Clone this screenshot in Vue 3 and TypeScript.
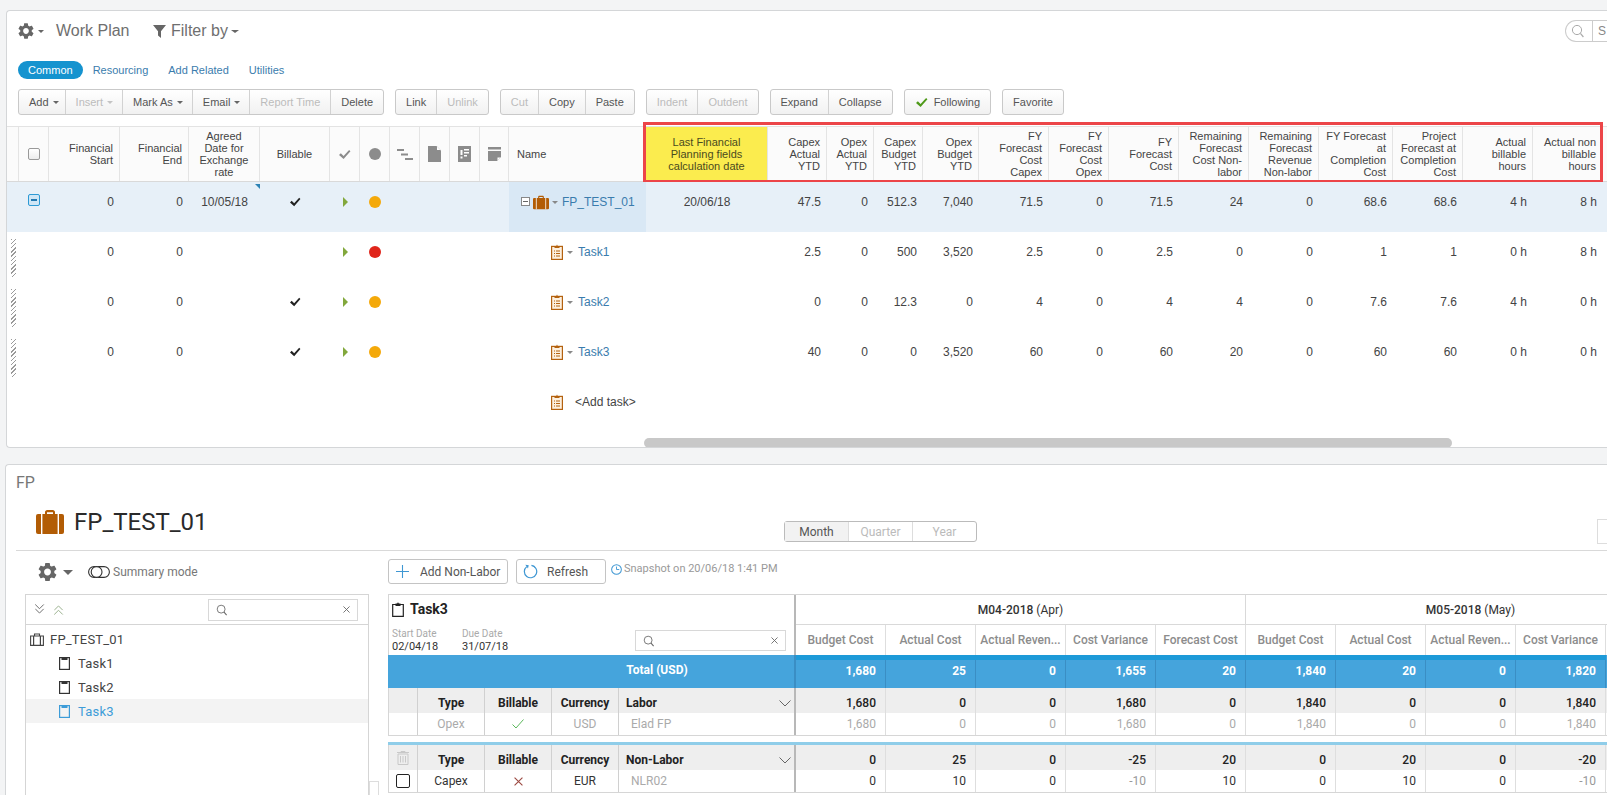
<script setup lang="ts">
interface PlanRow {
  kind: 'project' | 'task'
  name: string
  start: string
  end: string
  agreed?: string
  billable: boolean
  health: 'amber' | 'red'
  calcDate?: string
  values: string[]
}

interface HeadCell {
  label?: string
  icon?: string
  align?: 'left' | 'center'
}

const toolbar = [
  [
    { label: 'Add', menu: true },
    { label: 'Insert', menu: true, off: true },
    { label: 'Mark As', menu: true },
    { label: 'Email', menu: true },
    { label: 'Report Time', off: true },
    { label: 'Delete' },
  ],
  [{ label: 'Link' }, { label: 'Unlink', off: true }],
  [{ label: 'Cut', off: true }, { label: 'Copy' }, { label: 'Paste' }],
  [{ label: 'Indent', off: true }, { label: 'Outdent', off: true }],
  [{ label: 'Expand' }, { label: 'Collapse' }],
]

const leadHead: HeadCell[] = [
  { label: 'Financial\nStart' },
  { label: 'Financial\nEnd' },
  { label: 'Agreed\nDate for\nExchange\nrate', align: 'center' },
  { label: 'Billable', align: 'center' },
  { icon: 'i-check' },
  { icon: 'i-dot' },
  { icon: 'i-steps' },
  { icon: 'i-doc' },
  { icon: 'i-form' },
  { icon: 'i-note' },
  { label: 'Name', align: 'left' },
]

const valueHead = [
  'Capex\nActual\nYTD',
  'Opex\nActual\nYTD',
  'Capex\nBudget\nYTD',
  'Opex\nBudget\nYTD',
  'FY\nForecast\nCost\nCapex',
  'FY\nForecast\nCost\nOpex',
  'FY\nForecast\nCost',
  'Remaining\nForecast\nCost Non-\nlabor',
  'Remaining\nForecast\nRevenue\nNon-labor',
  'FY Forecast\nat\nCompletion\nCost',
  'Project\nForecast at\nCompletion\nCost',
  'Actual\nbillable\nhours',
  'Actual non\nbillable\nhours',
]

const planRows: PlanRow[] = [
  {
    kind: 'project', name: 'FP_TEST_01', start: '0', end: '0', agreed: '10/05/18', billable: true, health: 'amber',
    calcDate: '20/06/18',
    values: ['47.5', '0', '512.3', '7,040', '71.5', '0', '71.5', '24', '0', '68.6', '68.6', '4 h', '8 h'],
  },
  {
    kind: 'task', name: 'Task1', start: '0', end: '0', billable: false, health: 'red',
    values: ['2.5', '0', '500', '3,520', '2.5', '0', '2.5', '0', '0', '1', '1', '0 h', '8 h'],
  },
  {
    kind: 'task', name: 'Task2', start: '0', end: '0', billable: true, health: 'amber',
    values: ['0', '0', '12.3', '0', '4', '0', '4', '4', '0', '7.6', '7.6', '4 h', '0 h'],
  },
  {
    kind: 'task', name: 'Task3', start: '0', end: '0', billable: true, health: 'amber',
    values: ['40', '0', '0', '3,520', '60', '0', '60', '20', '0', '60', '60', '0 h', '0 h'],
  },
]

const measures = ['Budget Cost', 'Actual Cost', 'Actual Reven...', 'Cost Variance']
const monthHead = [...measures, 'Forecast Cost', ...measures]

const totals = ['1,680', '25', '0', '1,655', '20', '1,840', '20', '0', '1,820']
const laborHead = ['1,680', '0', '0', '1,680', '0', '1,840', '0', '0', '1,840']
const laborRow = ['1,680', '0', '0', '1,680', '0', '1,840', '0', '0', '1,840']
const nonLaborHead = ['0', '25', '0', '-25', '20', '0', '20', '0', '-20']
const nonLaborRow = ['0', '10', '0', '-10', '10', '0', '10', '0', '-10']
</script>

<template>
  <div class="page">
    <svg class="defs" width="0" height="0" aria-hidden="true">
      <symbol id="i-gear" viewBox="2 2 20 20">
        <path d="M19.14 12.94c.04-.3.06-.61.06-.94 0-.32-.02-.64-.07-.94l2.03-1.58a.49.49 0 0 0 .12-.61l-1.92-3.32a.488.488 0 0 0-.59-.22l-2.39.96c-.5-.38-1.03-.7-1.62-.94l-.36-2.54a.484.484 0 0 0-.48-.41h-3.84c-.24 0-.43.17-.47.41l-.36 2.54c-.59.24-1.13.57-1.62.94l-2.39-.96c-.22-.08-.47 0-.59.22L2.74 8.87c-.12.21-.08.47.12.61l2.03 1.58c-.05.3-.09.63-.09.94s.02.64.07.94l-2.03 1.58a.49.49 0 0 0-.12.61l1.92 3.32c.12.22.37.29.59.22l2.39-.96c.5.38 1.03.7 1.62.94l.36 2.54c.05.24.24.41.48.41h3.84c.24 0 .44-.17.47-.41l.36-2.54c.59-.24 1.13-.56 1.62-.94l2.39.96c.22.08.47 0 .59-.22l1.92-3.32c.12-.22.07-.47-.12-.61l-2.01-1.58zM12 15.6c-1.98 0-3.6-1.62-3.6-3.6s1.62-3.6 3.6-3.6 3.6 1.62 3.6 3.6-1.62 3.6-3.6 3.6z" fill="currentColor" />
      </symbol>
      <symbol id="i-check" viewBox="0 0 14 12">
        <path d="M1 6.5l2-2 3 3L12 1l1.5 1.5L6 11z" fill="currentColor" />
      </symbol>
      <symbol id="i-dot" viewBox="0 0 12 12">
        <circle cx="6" cy="6" r="6" fill="currentColor" />
      </symbol>
      <symbol id="i-steps" viewBox="0 0 16 12">
        <path d="M0 1h7v2H0zM4 5.5h7v2H4zM8 10h8v2H8z" fill="currentColor" />
      </symbol>
      <symbol id="i-doc" viewBox="0 0 13 16">
        <path d="M0 0h8.5L13 4.5V16H0z" fill="currentColor" />
        <path d="M9 .5L12.5 4H9z" fill="#fff" />
      </symbol>
      <symbol id="i-form" viewBox="0 0 13 16">
        <path d="M0 0h13v16H0z" fill="currentColor" />
        <path d="M2.5 4h2v5h-2zM2.5 10.5h2v2h-2zM6 3h5v1.5H6zM6 6h5v1.5H6zM6 9h3v1.5H6z" fill="#fff" />
      </symbol>
      <symbol id="i-note" viewBox="0 0 13 14">
        <path d="M0 0h13v2.5H0zM0 4h13v6l-4 4H0z" fill="currentColor" />
        <path d="M9.5 13.5V10.5h3z" fill="#fff" />
      </symbol>
      <symbol id="i-case" viewBox="0 0 28 24">
        <path d="M9 5V2.2C9 1 10 0 11.2 0h5.6C18 0 19 1 19 2.2V5h-2V2.2h-6V5z" fill="currentColor" />
        <rect y="4" width="28" height="20" rx="2" fill="currentColor" />
        <path d="M5 4h1.4v20H5zM21.6 4H23v20h-1.4z" fill="#fff" />
      </symbol>
      <symbol id="i-clip" viewBox="0 0 12 16">
        <rect x=".6" y="2.4" width="10.8" height="13" fill="#fdf0df" stroke="currentColor" stroke-width="1.2" />
        <path d="M3.5 4V2.2h1.7L6 .4l.8 1.8h1.7V4z" fill="currentColor" />
        <path d="M3 6.5h1v1H3zM5 6.5h4v1H5zM3 9h1v1H3zM5 9h4v1H5zM3 11.5h1v1H3zM5 11.5h4v1H5z" fill="currentColor" />
      </symbol>
      <symbol id="i-lens" viewBox="0 0 14 14">
        <circle cx="6" cy="6" r="4.6" fill="none" stroke="currentColor" />
        <path d="M9.4 9.4l3 3.6" stroke="currentColor" stroke-width="1.2" />
      </symbol>
      <symbol id="i-times" viewBox="0 0 8 8">
        <path d="M.5.5l7 7M7.5.5l-7 7" stroke="currentColor" fill="none" />
      </symbol>
      <symbol id="i-task" viewBox="0 0 11 13">
        <rect x=".6" y=".6" width="9.8" height="11.8" fill="none" stroke="currentColor" stroke-width="1.2" />
        <path d="M2.5 0h6v3h-6z" fill="currentColor" />
      </symbol>
      <symbol id="i-chev" viewBox="0 0 12 7">
        <path d="M.5.5L6 6 11.5.5" fill="none" stroke="currentColor" />
      </symbol>
    </svg>

    <!-- work plan -->
    <section class="plan">
      <header class="plan__head">
        <svg class="gear-sm"><use href="#i-gear" /></svg>
        <i class="caret plan__gear-caret" />
        <span class="plan__title">Work Plan</span>
        <svg class="funnel" viewBox="0 0 14 14"><path d="M0 0h14L8.6 6.6V14L5.4 11.4V6.6z" fill="#666" /></svg>
        <span class="plan__filter">Filter by</span>
        <i class="caret caret--wide" />
        <div class="plan__search">
          <svg class="plan__lens"><use href="#i-lens" /></svg>
          <span>S</span>
        </div>
      </header>

      <nav class="tabs">
        <a class="tabs__item tabs__item--on">Common</a>
        <a class="tabs__item">Resourcing</a>
        <a class="tabs__item">Add Related</a>
        <a class="tabs__item">Utilities</a>
      </nav>

      <div class="toolbar">
        <div v-for="(group, g) in toolbar" :key="g" class="btn-group">
          <button
            v-for="b in group"
            :key="b.label"
            type="button"
            class="btn"
            :class="{ 'btn--off': b.off, 'btn--menu': b.menu }"
          >
            {{ b.label }}<i v-if="b.menu" class="caret btn__caret" />
          </button>
        </div>
        <div class="btn-group">
          <button type="button" class="btn">
            <svg class="btn__check"><use href="#i-check" /></svg>Following
          </button>
        </div>
        <div class="btn-group">
          <button type="button" class="btn">Favorite</button>
        </div>
      </div>

      <div class="grid">
        <div class="grid__row grid__row--head">
          <div class="head-cell head-cell--blank" />
          <div class="head-cell head-cell--center"><span class="box" /></div>
          <div
            v-for="(h, i) in leadHead"
            :key="i"
            class="head-cell"
            :class="{ 'head-cell--center': h.align === 'center' || h.icon, 'head-cell--left': h.align === 'left' }"
          >
            <svg v-if="h.icon" class="head-icon" :class="h.icon"><use :href="'#' + h.icon" /></svg>
            <template v-else>{{ h.label }}</template>
          </div>
          <div class="head-cell head-cell--center head-cell--calc">Last Financial<br>Planning fields<br>calculation date</div>
          <div v-for="h in valueHead" :key="h" class="head-cell">{{ h }}</div>
          <div class="head-cell head-cell--blank" />
          <div class="grid__outline" />
        </div>

        <div
          v-for="row in planRows"
          :key="row.name"
          class="grid__row"
          :class="{ 'grid__row--sel': row.kind === 'project' }"
        >
          <div class="cell"><span v-if="row.kind === 'task'" class="hatch" /></div>
          <div class="cell cell--center">
            <span v-if="row.kind === 'project'" class="box box--minus" />
          </div>
          <div class="cell">{{ row.start }}</div>
          <div class="cell">{{ row.end }}</div>
          <div class="cell cell--center cell--agreed">{{ row.agreed }}</div>
          <div class="cell cell--center">
            <svg v-if="row.billable" class="tick"><use href="#i-check" /></svg>
          </div>
          <div class="cell cell--center"><i class="play" /></div>
          <div class="cell cell--center">
            <svg class="health" :class="'health--' + row.health"><use href="#i-dot" /></svg>
          </div>
          <div class="cell" />
          <div class="cell" />
          <div class="cell" />
          <div class="cell" />
          <div class="cell cell--name" :class="{ 'cell--name-sel': row.kind === 'project' }">
            <template v-if="row.kind === 'project'">
              <span class="tree-toggle" />
              <svg class="case-sm"><use href="#i-case" /></svg>
            </template>
            <svg v-else class="clip clip--indent"><use href="#i-clip" /></svg>
            <i class="caret caret--sm" />
            <a class="cell__link">{{ row.name }}</a>
          </div>
          <div class="cell cell--center">{{ row.calcDate }}</div>
          <div v-for="(v, i) in row.values" :key="i" class="cell">{{ v }}</div>
          <div class="cell" />
        </div>

        <div class="grid__row">
          <div v-for="n in 12" :key="n" class="cell" />
          <div class="cell cell--name">
            <svg class="clip clip--indent"><use href="#i-clip" /></svg>
            <span class="cell__add">&lt;Add task&gt;</span>
          </div>
        </div>
      </div>

      <div class="hscroll"><div class="hscroll__thumb" /></div>
    </section>

    <!-- financial plan -->
    <section class="fp">
      <div class="fp__label">FP</div>
      <div class="fp__top">
        <div class="fp__title">
          <svg class="case-lg"><use href="#i-case" /></svg>
          <h1>FP_TEST_01</h1>
        </div>
        <div class="period">
          <span class="period__item period__item--on">Month</span>
          <span class="period__item">Quarter</span>
          <span class="period__item">Year</span>
        </div>
        <div class="fp__top-btn" />
      </div>

      <div class="fp__body">
        <aside class="side">
          <div class="side__tools">
            <svg class="gear-lg"><use href="#i-gear" /></svg>
            <i class="caret caret--lg" />
            <svg class="toggle" viewBox="0 0 22 12">
              <rect x=".6" y=".6" width="20.8" height="10.8" rx="5.4" fill="none" stroke="#333" stroke-width="1.1" />
              <circle cx="8.6" cy="6" r="5.4" fill="#fff" stroke="#333" stroke-width="1.1" />
            </svg>
            <span>Summary mode</span>
          </div>
          <div class="side__wrap">
            <div class="tree">
              <div class="tree__bar">
                <svg class="dbl" viewBox="0 0 12 10"><use href="#i-chev" width="12" height="5" /><use href="#i-chev" y="4" width="12" height="5" /></svg>
                <svg class="dbl dbl--up" viewBox="0 0 12 10"><use href="#i-chev" width="12" height="5" /><use href="#i-chev" y="4" width="12" height="5" /></svg>
                <div class="search search--tree">
                  <svg class="search__lens"><use href="#i-lens" /></svg>
                  <svg class="search__x"><use href="#i-times" /></svg>
                </div>
              </div>
              <div class="tree__row tree__row--root">
                <svg class="tree__case" viewBox="0 0 14 13">
                  <path d="M4.5 3V1h5v2M.6 3h12.8v9.4H.6z" fill="none" stroke="#444" stroke-width="1.1" />
                  <path d="M3 3h1.2v9.4H3zM9.8 3H11v9.4H9.8z" fill="#444" />
                </svg>
                FP_TEST_01
              </div>
              <div class="tree__row"><svg class="tree__task"><use href="#i-task" /></svg>Task1</div>
              <div class="tree__row"><svg class="tree__task"><use href="#i-task" /></svg>Task2</div>
              <div class="tree__row tree__row--on"><svg class="tree__task"><use href="#i-task" /></svg>Task3</div>
            </div>
            <div class="side__thumb" />
          </div>
        </aside>

        <div class="main">
          <div class="main__tools">
            <button type="button" class="tool-btn tool-btn--add">
              <svg class="tool-btn__plus" viewBox="0 0 12 12"><path d="M6 0v12M0 6h12" stroke="#3f97d3" fill="none" /></svg>
              Add Non-Labor
            </button>
            <button type="button" class="tool-btn tool-btn--refresh">
              <svg class="tool-btn__spin" viewBox="0 0 16 16">
                <path d="M4 2.8A6.6 6.6 0 1 0 9 1.5" fill="none" stroke="#3f97d3" stroke-width="1.3" />
                <path d="M2.5 .8l3.6.6-.8 3.4z" fill="#3f97d3" />
                <path d="M10.5 2a6.600 6.600 0 0 1 3 2.500" fill="none" stroke="#3f97d3" stroke-dasharray="1 1.2" />
              </svg>
              Refresh
            </button>
            <svg class="clock" viewBox="0 0 12 12">
              <circle cx="6" cy="6" r="5.3" fill="none" stroke="#3f97d3" stroke-width="1.1" />
              <path d="M6 2.800V6h3" fill="none" stroke="#3f97d3" />
            </svg>
            <span class="snapshot">Snapshot on 20/06/18 1:41 PM</span>
          </div>

          <div class="sheet">
            <div class="sheet__row sheet__row--top">
              <div class="info">
                <div class="info__name">
                  <svg viewBox="0 0 12 15" class="info__clip">
                    <path d="M.7 2.500h10.600v11.800H.7z" fill="none" stroke="#222" stroke-width="1.200" />
                    <path d="M3.500 4V1.500h1.600L6 .2l.9 1.300h1.600V4z" fill="#222" />
                  </svg>
                  Task3
                </div>
                <div class="info__dates">
                  <div><small>Start Date</small>02/04/18</div>
                  <div><small>Due Date</small>31/07/18</div>
                  <div class="search search--sheet">
                    <svg class="search__lens"><use href="#i-lens" /></svg>
                    <svg class="search__x"><use href="#i-times" /></svg>
                  </div>
                </div>
              </div>
              <div class="period-head">
                <div class="months">
                  <div class="months__cell"><b>M04-2018</b> (Apr)</div>
                  <div class="months__cell"><b>M05-2018</b> (May)</div>
                </div>
                <div class="vals vals--head">
                  <div v-for="(m, i) in monthHead" :key="i" class="val">{{ m }}</div>
                </div>
              </div>
            </div>

            <div class="sheet__row sheet__row--total">
              <div class="lead lead--total">Total (USD)</div>
              <div class="vals vals--total">
                <div v-for="(v, i) in totals" :key="i" class="val">{{ v }}</div>
              </div>
            </div>

            <div class="sheet__row sheet__row--group">
              <div class="lead">
                <div class="c c--tool" />
                <div class="c c--type">Type</div>
                <div class="c c--type">Billable</div>
                <div class="c c--type">Currency</div>
                <div class="c c--name">Labor<svg class="c__chev"><use href="#i-chev" /></svg></div>
              </div>
              <div class="vals"><div v-for="(v, i) in laborHead" :key="i" class="val">{{ v }}</div></div>
            </div>
            <div class="sheet__row sheet__row--line sheet__row--muted">
              <div class="lead">
                <div class="c c--tool" />
                <div class="c c--type">Opex</div>
                <div class="c c--type">
                  <svg class="yes" viewBox="0 0 12 10"><path d="M.5 5.500L4 9l7.500-8.500" fill="none" stroke="#5cb85c" /></svg>
                </div>
                <div class="c c--type">USD</div>
                <div class="c c--name c--ref">Elad FP</div>
              </div>
              <div class="vals"><div v-for="(v, i) in laborRow" :key="i" class="val">{{ v }}</div></div>
            </div>

            <div class="sheet__gap" />

            <div class="sheet__row sheet__row--group">
              <div class="lead">
                <div class="c c--tool">
                  <svg class="bin" viewBox="0 0 12 14">
                    <path d="M1 3h10v10.500H1zM0 1.500h12M4 1.500V.5h4v1M3.500 5v6.500M6 5v6.500M8.500 5v6.500" fill="none" stroke="#c8c8c8" />
                  </svg>
                </div>
                <div class="c c--type">Type</div>
                <div class="c c--type">Billable</div>
                <div class="c c--type">Currency</div>
                <div class="c c--name">Non-Labor<svg class="c__chev"><use href="#i-chev" /></svg></div>
              </div>
              <div class="vals"><div v-for="(v, i) in nonLaborHead" :key="i" class="val">{{ v }}</div></div>
            </div>
            <div class="sheet__row sheet__row--line">
              <div class="lead">
                <div class="c c--tool"><span class="pick" /></div>
                <div class="c c--type">Capex</div>
                <div class="c c--type">
                  <svg class="no" viewBox="0 0 8 8"><path d="M.5.500l7 7M7.500.500l-7 7" stroke="#9c4a42" fill="none" /></svg>
                </div>
                <div class="c c--type">EUR</div>
                <div class="c c--name c--ref">NLR02</div>
              </div>
              <div class="vals">
                <div v-for="(v, i) in nonLaborRow" :key="i" class="val" :class="{ 'val--neg': v === '-10' }">{{ v }}</div>
              </div>
            </div>
          </div>
        </div>
      </div>
    </section>
  </div>
</template>

<style scoped>
.page {
  width: 1607px;
  height: 795px;
  overflow: hidden;
  box-sizing: border-box;
  padding-top: 10px;
  color: #444;
  font-family: "Liberation Sans", Arial, sans-serif;
}

.defs {
  position: absolute;
}

svg {
  display: block;
  flex: none;
}

/* shared carets */
.caret {
  display: inline-block;
  flex: none;
  width: 0;
  height: 0;
  border-left: 3px solid transparent;
  border-right: 3px solid transparent;
  border-top: 3px solid #666;
}

.caret--wide {
  border-left-width: 4px;
  border-right-width: 4px;
  margin-left: 3px;
}

.caret--sm {
  border-top-color: #888;
  margin: 0 5px 0 4px;
}

.caret--lg {
  border-left-width: 5px;
  border-right-width: 5px;
  border-top-width: 5px;
  border-top-color: #666;
}

/* work plan card */
.plan {
  box-sizing: border-box;
  height: 438px;
  margin-left: 6px;
  overflow: hidden;
  background: #fff;
  border: 1px solid #d4d6d8;
  border-right: 0;
  border-radius: 4px 0 0 4px;
}

.plan__head {
  display: flex;
  align-items: center;
  height: 40px;
  padding-left: 11px;
  color: #6f6f6f;
  font-size: 16px;
}

.gear-sm {
  width: 16px;
  height: 16px;
  color: #666;
}

.plan__gear-caret {
  margin: 0 12px 0 4px;
}

.plan__title {
  width: 97px;
}

.funnel {
  width: 13px;
  height: 13px;
  margin-right: 5px;
}

.plan__search {
  display: flex;
  align-items: center;
  box-sizing: border-box;
  width: 60px;
  height: 22px;
  margin-left: auto;
  margin-right: -18px;
  border: 1px solid #ccc;
  border-right: 0;
  border-radius: 11px 0 0 11px;
  color: #888;
  font-size: 12px;
}

.plan__lens {
  width: 14px;
  height: 14px;
  margin: 0 7px 0 5px;
  color: #aaa;
}

.plan__search span {
  height: 20px;
  line-height: 20px;
  padding-left: 5px;
  border-left: 1px solid #ccc;
}

.tabs {
  display: flex;
  height: 18px;
  margin-top: 10px;
  padding-left: 11px;
  font-size: 11px;
  line-height: 18px;
}

.tabs__item {
  padding: 0 10px;
  color: #3a7cad;
  white-space: nowrap;
}

.tabs__item--on {
  color: #fff;
  background: #1593cf;
  border-radius: 9px;
}

.toolbar {
  display: flex;
  gap: 11px;
  margin-top: 10px;
  padding-left: 11px;
}

.btn-group {
  display: flex;
  height: 26px;
  box-sizing: border-box;
  border: 1px solid #c9c9c9;
  border-radius: 3px;
  background: linear-gradient(#fff, #f1f1f1);
}

.btn {
  display: flex;
  align-items: center;
  appearance: none;
  margin: 0;
  padding: 0 10px;
  border: 0;
  border-left: 1px solid #d2d2d2;
  background: none;
  color: #555;
  font: inherit;
  font-size: 11px;
  white-space: nowrap;
}

.btn:first-child {
  border-left: 0;
}

.btn--off {
  color: #bcbcbc;
}

.btn--menu {
  padding-right: 9px;
}

.btn--menu:first-child {
  padding-right: 6px;
}

.btn__caret {
  margin-left: 4px;
}

.btn--off .btn__caret {
  border-top-color: #c4c4c4;
}

.btn__check {
  width: 13px;
  height: 11px;
  margin-right: 6px;
  color: #4f9a1a;
}

.grid {
  margin-top: 11px;
}

.grid__row {
  position: relative;
  display: grid;
  grid-template-columns: 12px 30px 71px 69px 71px 70px 30px 30px 30px 30px 30px 29px 137px 122px 59px 47px 49px 56px 70px 60px 70px 70px 70px 74px 70px 70px 70px 1fr;
  height: 50px;
}

.grid__row--head {
  height: 54px;
  background: #fbfbfb;
  border-top: 1px solid #e3e3e3;
  border-bottom: 1px solid #d9d9d9;
}

.grid__row--sel {
  background: #e7f0f8;
}

.grid__outline {
  position: absolute;
  top: -5px;
  left: 636px;
  width: 960px;
  height: 61px;
  box-sizing: border-box;
  border: 3px solid #ec4548;
  pointer-events: none;
}

.head-cell {
  display: flex;
  align-items: center;
  justify-content: flex-end;
  box-sizing: border-box;
  padding: 0 6px 0 2px;
  border-right: 1px solid #e4e4e4;
  color: #444;
  font-size: 11px;
  line-height: 12px;
  text-align: right;
  white-space: pre-line;
}

.head-cell--blank:last-child {
  border-right: 0;
}

.head-cell--center {
  justify-content: center;
  padding: 0;
  text-align: center;
}

.head-cell--left {
  justify-content: flex-start;
  padding-left: 8px;
  border-right: 0;
}

.head-cell--calc {
  background: #fbec4e;
  color: #4a4a20;
}

.head-icon {
  color: #8c8c8c;
}

.i-check {
  width: 13px;
  height: 11px;
}

.i-dot {
  width: 12px;
  height: 12px;
}

.i-steps {
  width: 16px;
  height: 12px;
}

.i-doc,
.i-form {
  width: 13px;
  height: 16px;
}

.i-note {
  width: 13px;
  height: 14px;
}

.box {
  display: block;
  box-sizing: border-box;
  width: 12px;
  height: 12px;
  border: 1px solid #999;
  border-radius: 2px;
  background: linear-gradient(#fff, #ececec);
}

.box--minus {
  position: relative;
  border-color: #2d9ad5;
  background: #cfe6f6;
}

.box--minus::after {
  content: "";
  position: absolute;
  left: 2px;
  top: 4px;
  width: 6px;
  height: 2px;
  background: #2278b0;
}

.cell {
  box-sizing: border-box;
  padding: 12px 6px 0 0;
  color: #444;
  font-size: 12px;
  line-height: 16px;
  text-align: right;
}

.cell--center {
  display: flex;
  justify-content: center;
  padding-right: 0;
  text-align: center;
}

.cell--agreed {
  position: relative;
}

.grid__row--sel .cell--agreed::after {
  content: "";
  position: absolute;
  top: 2px;
  right: 0;
  border-top: 5px solid #2d83b5;
  border-left: 5px solid transparent;
}

.hatch {
  display: block;
  width: 5px;
  height: 38px;
  margin: -5px 0 0 4px;
  background: repeating-linear-gradient(135deg, #9a9a9a 0 1px, #fff 1px 3px);
}

.tick {
  width: 12px;
  height: 10px;
  margin-top: 3px;
  color: #222;
}

.play {
  display: block;
  width: 0;
  height: 0;
  margin-top: 3px;
  border-top: 5px solid transparent;
  border-bottom: 5px solid transparent;
  border-left: 5px solid #82a83c;
}

.health {
  width: 12px;
  height: 12px;
  margin-top: 2px;
}

.health--amber {
  color: #f4a90a;
}

.health--red {
  color: #e0251b;
}

.cell--name {
  display: flex;
  align-items: flex-start;
  padding-right: 0;
  text-align: left;
}

.cell--name-sel {
  background: #d9e8f5;
}

.tree-toggle {
  position: relative;
  flex: none;
  box-sizing: border-box;
  width: 9px;
  height: 9px;
  margin: 3px 3px 0 12px;
  border: 1px solid #888;
  background: #fff;
}

.tree-toggle::after {
  content: "";
  position: absolute;
  left: 1px;
  top: 3px;
  width: 5px;
  height: 1px;
  background: #666;
}

.case-sm {
  width: 16px;
  height: 15px;
  margin-top: 1px;
  color: #b25c05;
}

.cell--name .caret--sm {
  margin-top: 7px;
}

.clip {
  width: 12px;
  height: 16px;
  color: #b4620f;
}

.clip--indent {
  margin-left: 42px;
}

.cell__link {
  color: #3a7cad;
  white-space: nowrap;
}

.cell--name-sel .caret--sm {
  margin: 7px 4px 0 3px;
}

.cell__add {
  margin-left: 12px;
  white-space: nowrap;
}

.hscroll {
  height: 10px;
  margin-top: 6px;
  padding-left: 637px;
}

.hscroll__thumb {
  width: 808px;
  height: 10px;
  border-radius: 5px;
  background: #c8c8c8;
}

/* financial plan card */
.fp {
  box-sizing: border-box;
  height: 400px;
  margin: 16px 0 0 5px;
  padding-left: 10px;
  overflow: hidden;
  background: #fff;
  border: 1px solid #d4d6d8;
  border-right: 0;
  border-bottom: 0;
  border-radius: 4px 0 0 0;
  font-family: Roboto, "Liberation Sans", sans-serif;
}

.fp__label {
  height: 32px;
  color: #777;
  font-size: 16px;
  line-height: 36px;
}

.fp__top {
  display: flex;
  align-items: flex-start;
  height: 53px;
  border-bottom: 1px solid #d9d9d9;
}

.fp__title {
  display: flex;
  align-items: center;
  flex: none;
  gap: 10px;
  width: 748px;
  height: 50px;
  margin-left: 20px;
}

.fp__title h1 {
  margin: 0;
  color: #2a2a2a;
  font-size: 24px;
  font-weight: 400;
  line-height: 30px;
}

.case-lg {
  width: 28px;
  height: 24px;
  color: #b25c05;
}

.period {
  display: flex;
  flex: none;
  height: 21px;
  margin-top: 24px;
  box-sizing: border-box;
  border: 1px solid #bbb;
  border-radius: 3px;
  color: #bbb;
  font-size: 12px;
  line-height: 20px;
}

.period__item {
  width: 63px;
  text-align: center;
  border-left: 1px solid #ddd;
}

.period__item:first-child {
  border-left: 0;
}

.period__item--on {
  background: #f2f2f2;
  color: #555;
}

.fp__top-btn {
  width: 30px;
  height: 25px;
  margin: 22px 0 0 620px;
  box-sizing: border-box;
  border: 1px solid #ddd;
  flex: none;
}

.fp__body {
  display: flex;
}

.side {
  flex: none;
  width: 372px;
}

.side__tools {
  display: flex;
  align-items: center;
  height: 43px;
  padding: 0 0 2px 22px;
  box-sizing: border-box;
  color: #777;
  font-size: 12px;
}

.gear-lg {
  width: 19px;
  height: 20px;
  color: #666;
}

.side__tools .caret--lg {
  margin: 1px 15px 0 6px;
}

.toggle {
  width: 22px;
  height: 12px;
  margin-right: 3px;
}

.side__wrap {
  display: flex;
  padding-left: 9px;
}

.tree {
  box-sizing: border-box;
  width: 344px;
  height: 210px;
  border-left: 1px solid #d5d5d5;
  border-right: 1px solid #d5d5d5;
  color: #444;
  font-size: 13px;
}

.side__thumb {
  flex: none;
  width: 10px;
  height: 20px;
  margin-top: 187px;
  box-sizing: border-box;
  border: 1px solid #ddd;
}

.tree__bar {
  display: flex;
  align-items: center;
  box-sizing: border-box;
  height: 31px;
  padding: 0 10px 0 7px;
  border-top: 1px solid #d5d5d5;
  border-bottom: 1px solid #d5d5d5;
}

.dbl {
  width: 13px;
  height: 11px;
  margin-right: 6px;
  color: #444;
  overflow: visible;
}

.dbl--up {
  transform: scaleY(-1);
  color: #7d9a6e;
}

.search {
  display: flex;
  align-items: center;
  justify-content: space-between;
  box-sizing: border-box;
  height: 22px;
  padding: 0 7px;
  border: 1px solid #d8d8d8;
  background: #fff;
}

.search--tree {
  width: 150px;
  margin-left: auto;
}

.search__lens {
  width: 12px;
  height: 12px;
  color: #666;
}

.search__x {
  width: 7px;
  height: 7px;
  color: #666;
}

.tree__row {
  display: flex;
  align-items: center;
  height: 24px;
  padding-left: 33px;
  letter-spacing: .2px;
}

.tree__row--root {
  margin-top: 2px;
  padding-left: 4px;
}

.tree__case {
  width: 14px;
  height: 13px;
  margin-right: 6px;
}

.tree__task {
  width: 11px;
  height: 13px;
  margin-right: 8px;
  color: #333;
}

.tree__row--on {
  background: #f3f3f3;
  color: #3d9cd8;
}

.tree__row--on .tree__task {
  color: #3d9cd8;
}

.main {
  flex: none;
  width: 1300px;
}

.main__tools {
  display: flex;
  align-items: flex-start;
  height: 43px;
  padding-top: 8px;
  box-sizing: border-box;
}

.tool-btn {
  display: flex;
  align-items: center;
  box-sizing: border-box;
  height: 25px;
  padding: 0;
  border: 1px solid #c4c4c4;
  border-radius: 3px;
  background: #fff;
  color: #555;
  font: inherit;
  font-size: 12px;
  white-space: nowrap;
}

.tool-btn--add {
  width: 120px;
  padding-left: 7px;
}

.tool-btn__plus {
  width: 13px;
  height: 13px;
  margin-right: 11px;
}

.tool-btn--refresh {
  width: 90px;
  margin-left: 8px;
  padding-left: 6px;
}

.tool-btn__spin {
  width: 15px;
  height: 15px;
  margin-right: 9px;
}

.clock {
  width: 11px;
  height: 11px;
  margin: 5px 2px 0 5px;
}

.snapshot {
  margin-top: 3px;
  color: #999;
  font-size: 11px;
  line-height: 14px;
  white-space: nowrap;
}

.sheet {
  border-top: 1px solid #d6d6d6;
  color: #333;
  font-size: 12px;
}

.sheet__row {
  display: flex;
  width: 1300px;
}

.sheet__row--top {
  height: 60px;
}

.info {
  flex: none;
  box-sizing: border-box;
  width: 408px;
  padding-left: 3px;
  border-left: 1px solid #d6d6d6;
  border-right: 2px solid #b8b8b8;
}

.info__name {
  display: flex;
  align-items: center;
  height: 28px;
  color: #222;
  font-size: 14px;
  font-weight: 700;
}

.info__clip {
  width: 12px;
  height: 15px;
  margin-right: 6px;
}

.info__dates {
  display: flex;
  margin-top: 5px;
  color: #333;
  font-size: 11px;
  line-height: 14px;
}

.info__dates > div:nth-child(1),
.info__dates > div:nth-child(2) {
  width: 70px;
}

.info__dates small {
  display: block;
  color: #aaa;
  font-size: 10px;
  line-height: 12px;
}

.search--sheet {
  width: 151px;
  height: 21px;
  margin: 2px 0 0 103px;
}

.period-head {
  flex: none;
}

.months {
  display: flex;
  height: 30px;
  border-bottom: 1px solid #d9d9d9;
  box-sizing: border-box;
}

.months__cell {
  flex: none;
  width: 450px;
  line-height: 30px;
  text-align: center;
  border-right: 1px solid #d9d9d9;
  box-sizing: border-box;
  color: #333;
}

.months__cell b {
  font-weight: 500;
}

.vals {
  display: flex;
  flex: none;
}

.val {
  flex: none;
  box-sizing: border-box;
  width: 90px;
  padding-right: 9px;
  border-right: 1px solid #dedede;
  text-align: right;
  white-space: nowrap;
}

.vals--head {
  height: 30px;
  color: #8c8c8c;
  font-weight: 500;
  line-height: 30px;
}

.vals--head .val {
  padding-right: 0;
  text-align: center;
  overflow: hidden;
}

.sheet__row--total {
  height: 33px;
  background: #45a4dc;
  color: #fff;
  font-weight: 700;
}

.vals--total {
  border-top: 5px solid #1d9ad8;
  line-height: 22px;
}

.vals--total .val {
  border-right-color: #3a8ec4;
}

.lead {
  display: flex;
  flex: none;
  box-sizing: border-box;
  width: 408px;
  border-right: 2px solid #b8b8b8;
}

.lead--total {
  justify-content: center;
  padding-left: 132px;
  font-size: 12px;
  line-height: 30px;
  border-right-color: #3a8ec4;
}

.sheet__row--group {
  height: 25px;
  background: #eeeeee;
  color: #222;
  font-weight: 700;
  line-height: 30px;
}

.sheet__row--group .val {
  font-weight: 500;
}

.sheet__row--group .c--type,
.sheet__row--group .c--name {
  padding-top: 5px;
}

.sheet__row--line {
  height: 23px;
  line-height: 22px;
  border-bottom: 1px solid #d6d6d6;
  box-sizing: border-box;
}

.sheet__row--muted {
  color: #aaa;
}

.sheet__gap {
  box-sizing: border-box;
  height: 9px;
  border-bottom: 3px solid #8fcde9;
}

.c {
  display: flex;
  align-items: center;
  box-sizing: border-box;
  border-right: 1px solid #d0d0d0;
}

.c--tool {
  justify-content: center;
  width: 30px;
  border-left: 1px solid #d6d6d6;
}

.c--type {
  justify-content: center;
  width: 67px;
}

.c--name {
  position: relative;
  flex: 1;
  padding-left: 7px;
  border-right: 0;
}

.c--ref {
  padding-left: 12px;
  color: #aaa;
  font-weight: 400;
}

.c__chev {
  position: absolute;
  right: 3px;
  top: 12px;
  width: 12px;
  height: 7px;
  color: #666;
}

.yes {
  width: 12px;
  height: 10px;
}

.no {
  width: 9px;
  height: 9px;
}

.bin {
  width: 12px;
  height: 14px;
}

.pick {
  display: block;
  box-sizing: border-box;
  width: 14px;
  height: 14px;
  border: 1px solid #222;
  border-radius: 2px;
}

.val--neg {
  color: #999;
}
</style>

<style>
html,
body {
  margin: 0;
  background: #f3f4f5;
  overflow: hidden;
}
</style>
